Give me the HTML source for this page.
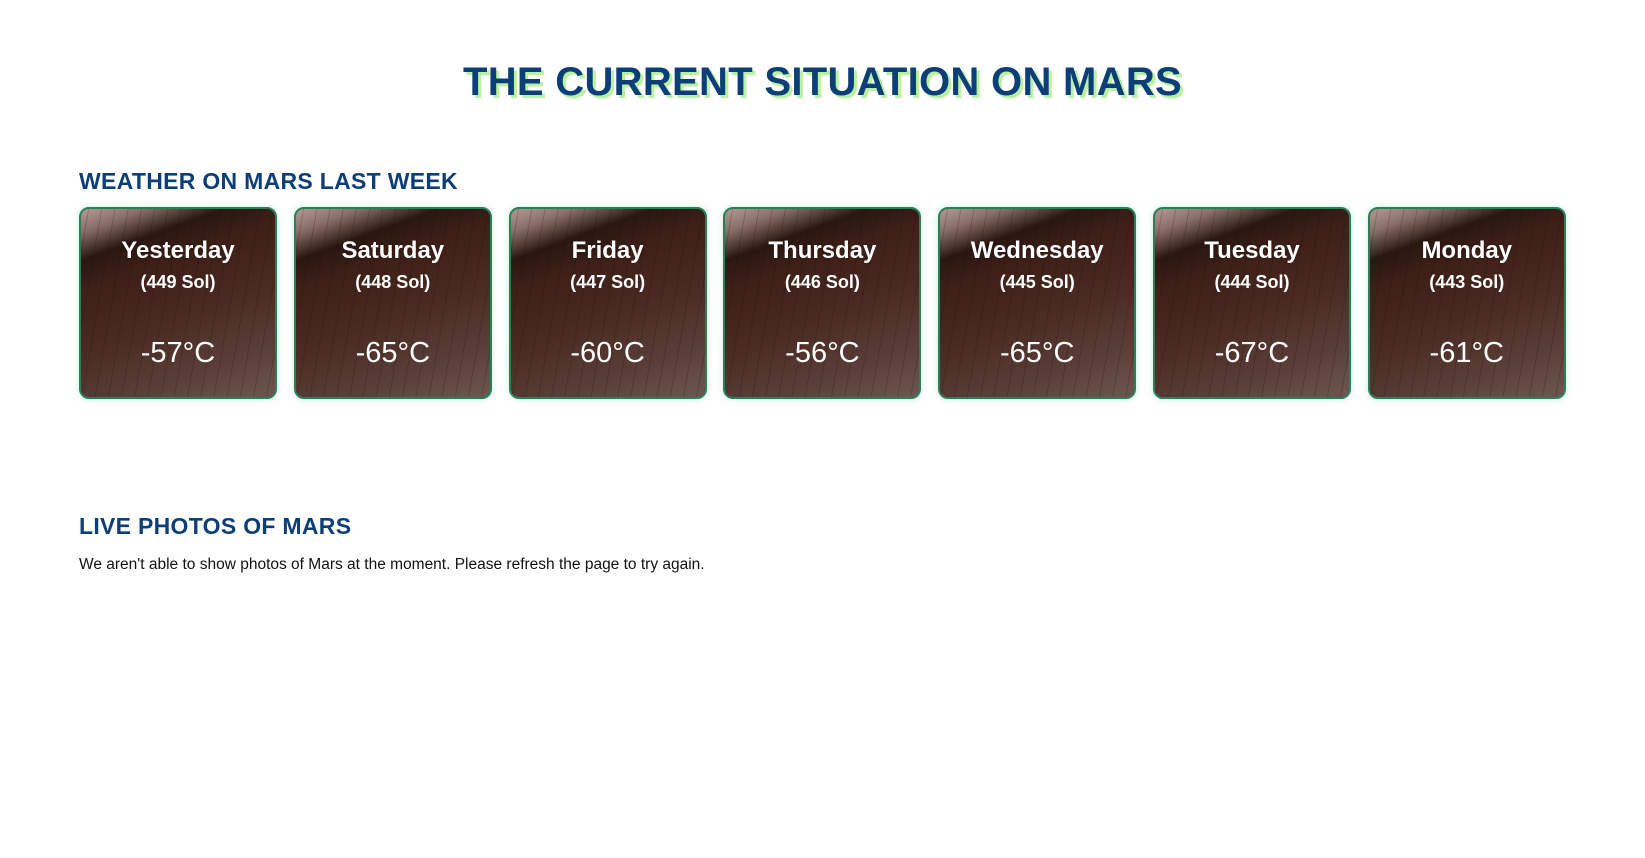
<!DOCTYPE html>
<html><head><meta charset="utf-8"><style>
body{margin:0;background:#fff;font-family:"Liberation Sans",sans-serif;width:1645px;height:858px;overflow:hidden;position:relative}
h1{position:absolute;top:60px;left:0;width:1645px;text-align:center;margin:0;font-size:40px;font-weight:900;color:#0c3e78;text-shadow:3px 3px 0 #b8f2a0;letter-spacing:0.3px}
h2{position:absolute;left:79px;margin:0;font-size:23px;font-weight:bold;color:#0c3e78;letter-spacing:0.3px}
.cards{position:absolute;left:79px;top:207px;display:flex;gap:16.8px}
.card{width:194px;height:188px;border:2px solid #2b7e58;border-radius:10px;box-shadow:0 0 6px rgba(120,220,170,.5);color:#fff;text-align:center;position:relative;overflow:hidden;
background:
repeating-linear-gradient(100deg,rgba(0,0,0,0) 0 7px,rgba(20,8,5,.2) 7px 8px,rgba(0,0,0,0) 8px 13px),
linear-gradient(160deg,#b59a93 0%,#8a6f68 9%,#2a1712 20%,#3e2018 32%,#4a2a22 55%,#5a3f38 80%,#6e5751 100%)}
.d{position:absolute;top:28px;width:100%;font-size:24px;font-weight:bold;text-shadow:0 0 2px rgba(0,0,0,.4)}
.s{position:absolute;top:63px;width:100%;font-size:18px;font-weight:bold}
.t{position:absolute;top:128px;width:100%;font-size:29px}
p{position:absolute;left:79px;top:556px;margin:0;font-size:15.5px;color:#111}
</style></head><body>
<h1>THE CURRENT SITUATION ON MARS</h1>
<h2 style="top:168px">WEATHER ON MARS LAST WEEK</h2>
<div class="cards">
<div class="card"><div class="d">Yesterday</div><div class="s">(449 Sol)</div><div class="t">-57°C</div></div>
<div class="card"><div class="d">Saturday</div><div class="s">(448 Sol)</div><div class="t">-65°C</div></div>
<div class="card"><div class="d">Friday</div><div class="s">(447 Sol)</div><div class="t">-60°C</div></div>
<div class="card"><div class="d">Thursday</div><div class="s">(446 Sol)</div><div class="t">-56°C</div></div>
<div class="card"><div class="d">Wednesday</div><div class="s">(445 Sol)</div><div class="t">-65°C</div></div>
<div class="card"><div class="d">Tuesday</div><div class="s">(444 Sol)</div><div class="t">-67°C</div></div>
<div class="card"><div class="d">Monday</div><div class="s">(443 Sol)</div><div class="t">-61°C</div></div>
</div>
<h2 style="top:513px">LIVE PHOTOS OF MARS</h2>
<p>We aren't able to show photos of Mars at the moment. Please refresh the page to try again.</p>
</body></html>
